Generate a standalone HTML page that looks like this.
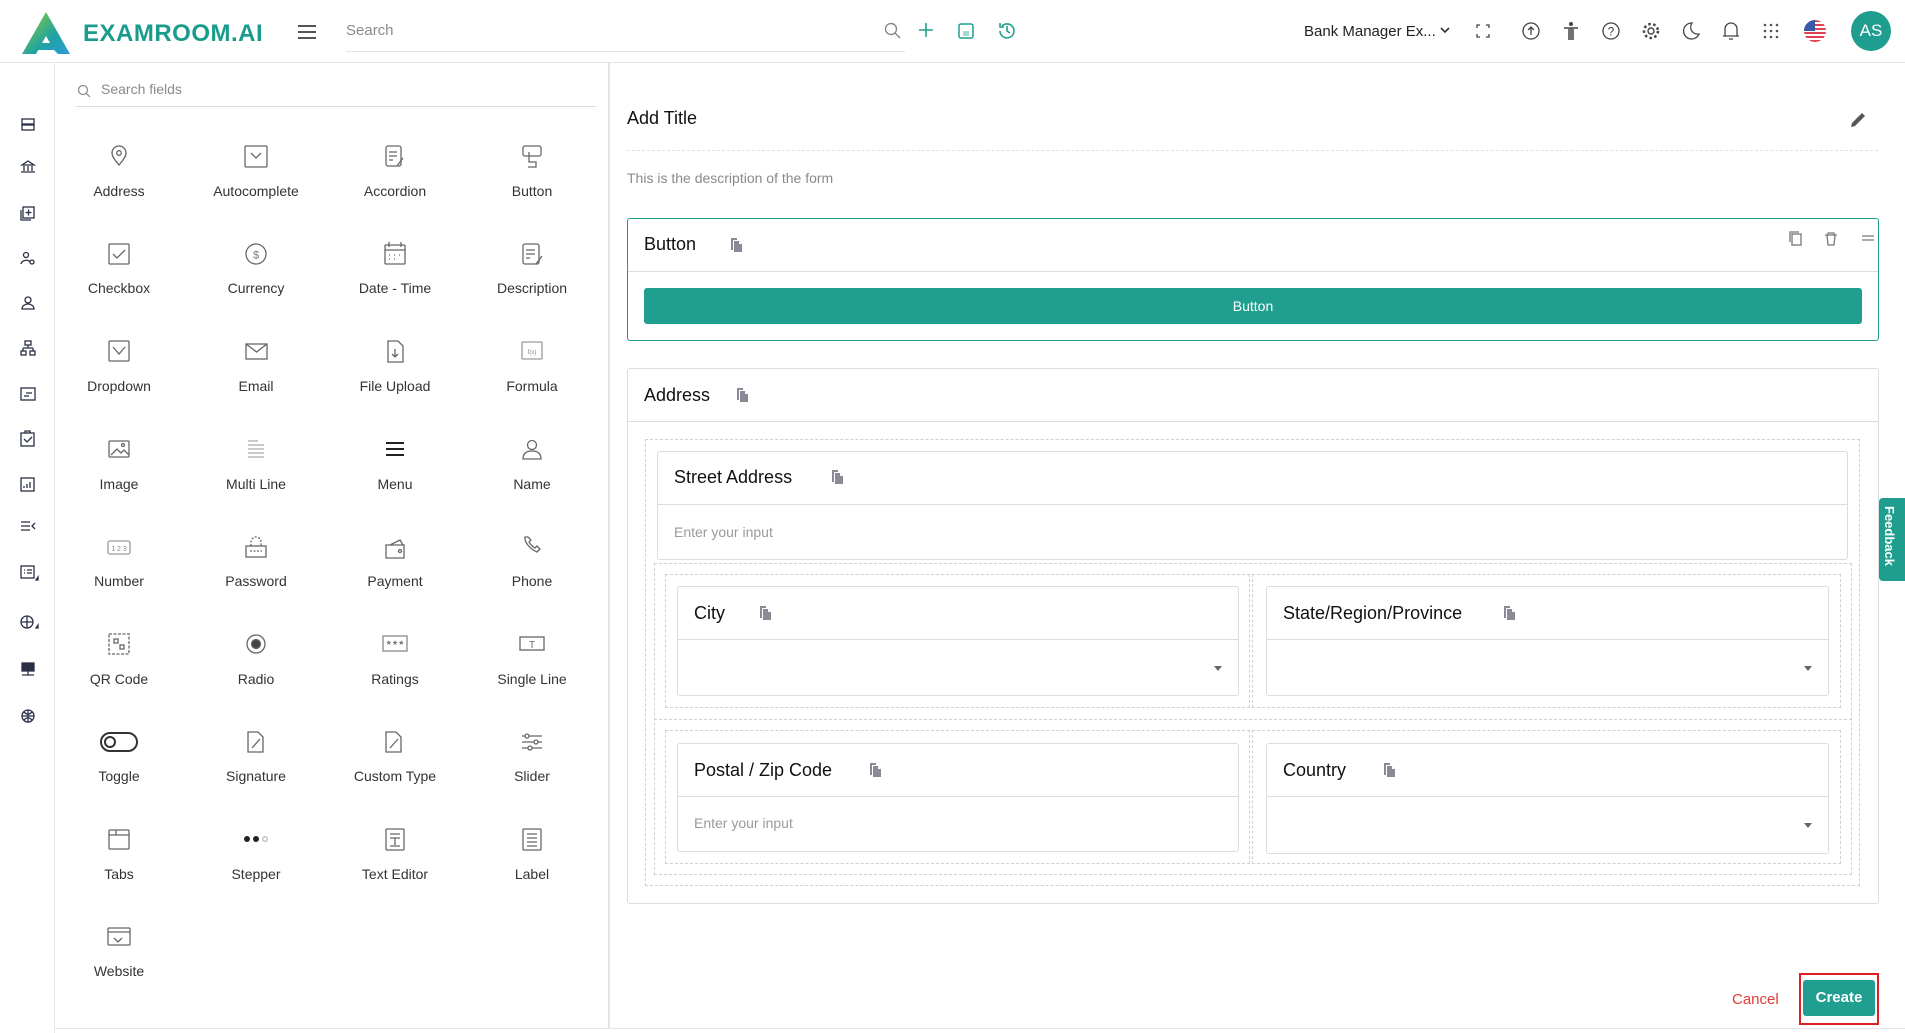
<!DOCTYPE html>
<html><head><meta charset="utf-8"><style>
*{box-sizing:border-box;margin:0;padding:0}
body{width:1905px;height:1033px;overflow:hidden;background:#fff;font-family:"Liberation Sans",sans-serif;position:relative;color:#222}
.a{position:absolute}
.hdr{left:0;top:0;width:1905px;height:63px;border-bottom:1px solid #e6e6e6}
.rail{left:0;top:63px;width:55px;height:970px;border-right:1px solid #e6e6e6}
.panel{left:55px;top:63px;width:555px;height:965px;border-right:2px solid #e4e4e8}
.fl{position:absolute;width:130px;text-align:center;font-size:14px;color:#333}
.card{position:absolute;border:1px solid #dcdce0;border-radius:3px;background:#fff}
.ttl{position:absolute;font-size:18px;color:#111}
.dash{position:absolute;border:1px dashed #cfcfd4}
.cp{position:absolute;width:11px;height:14px}
.ph{position:absolute;font-size:14px;color:#9a9aa0}
.car{position:absolute;width:0;height:0;border-left:4px solid transparent;border-right:4px solid transparent;border-top:5px solid #666}
</style></head><body>
<svg width="0" height="0" style="position:absolute"><defs>
<symbol id="cp" viewBox="0 0 11 14"><path d="M0 0h6v2H2v10H0z" fill="#8a8a96"/><path d="M3 3h5l3 3v8H3z" fill="#8a8a96"/><path d="M8 3v3h3" fill="#fff"/></symbol>
</defs></svg>

<div class="a hdr">
 <svg class="a" style="left:22px;top:12px" width="48" height="42" viewBox="0 0 48 42"><defs><linearGradient id="g" x1="0" y1="0" x2="1" y2="1"><stop offset="0" stop-color="#9acd32"/><stop offset=".6" stop-color="#1fa3a0"/><stop offset="1" stop-color="#2d9cdb"/></linearGradient></defs><path d="M24 0L0 42h14l10-18 4 7h-8l-4 7h16l4 4h12z" fill="url(#g)"/></svg>
 <div class="a" style="left:83px;top:20px;font-size:24px;font-weight:bold;color:#1a9c8c;letter-spacing:0.5px">EXAMROOM.AI</div>
 <div class="a" style="left:298px;top:25px;width:18px;height:2px;background:#555;box-shadow:0 6px 0 #555,0 12px 0 #555"></div>
 <div class="a" style="left:346px;top:22px;font-size:15px;color:#8a8a8a">Search</div>
 <div class="a" style="left:346px;top:51px;width:559px;height:1px;background:#e3e3e3"></div>
 <svg class="a" style="left:884px;top:22px" width="18" height="18"><circle cx="7" cy="7" r="5.5" fill="none" stroke="#888" stroke-width="1.4"/><path d="M11 11l5 5" stroke="#888" stroke-width="1.4"/></svg>
 <svg class="a" style="left:918px;top:22px" width="16" height="16"><path d="M8 1v14M1 8h14" stroke="#1fa08e" stroke-width="1.6"/></svg>
 <svg class="a" style="left:957px;top:22px" width="18" height="18"><rect x="2" y="2" width="14" height="14" rx="2" fill="none" stroke="#1fa08e" stroke-width="1.5"/><rect x="6" y="9" width="6" height="5" fill="#9fd8cf"/></svg>
 <svg class="a" style="left:997px;top:21px" width="19" height="19"><path d="M3 10a7 7 0 1 0 2-5M3 2v4h4M10 5v5l3 2" fill="none" stroke="#1fa08e" stroke-width="1.6"/></svg>
 <div class="a" style="left:1304px;top:23px;font-size:15px;color:#222">Bank Manager Ex...</div>
 <svg class="a" style="left:1440px;top:27px" width="10" height="8"><path d="M1 1l4 4 4-4" fill="none" stroke="#333" stroke-width="1.6"/></svg>
 <svg class="a" style="left:1476px;top:24px" width="14" height="14"><path d="M1 4V1h3M10 1h3v3M13 10v3h-3M4 13H1v-3" fill="none" stroke="#444" stroke-width="1.3"/></svg>
 <svg class="a" style="left:1521px;top:21px" width="20" height="20"><circle cx="10" cy="10" r="8" fill="none" stroke="#444" stroke-width="1.3"/><path d="M10 14V6M7 9l3-3 3 3" fill="none" stroke="#444" stroke-width="1.3"/></svg>
 <svg class="a" style="left:1563px;top:21px" width="16" height="20"><circle cx="8" cy="3" r="2" fill="#444"/><path d="M1 7h14M8 7v12M6 8v11M10 8v11" stroke="#444" stroke-width="1.5"/></svg>
 <svg class="a" style="left:1601px;top:21px" width="20" height="20"><circle cx="10" cy="10" r="8" fill="none" stroke="#444" stroke-width="1.3"/><text x="10" y="14.5" font-size="12" text-anchor="middle" fill="#444" font-family="Liberation Sans">?</text></svg>
 <svg class="a" style="left:1641px;top:21px" width="20" height="20"><circle cx="10" cy="10" r="3" fill="none" stroke="#444" stroke-width="1.4"/><circle cx="10" cy="10" r="7" fill="none" stroke="#444" stroke-width="2.5" stroke-dasharray="2.5 2.5"/></svg>
 <svg class="a" style="left:1682px;top:21px" width="18" height="20"><path d="M10 2a8 8 0 1 0 7 11A7 7 0 0 1 10 2z" fill="none" stroke="#444" stroke-width="1.3"/></svg>
 <svg class="a" style="left:1722px;top:20px" width="18" height="22"><path d="M3 16V9a6 6 0 0 1 12 0v7H3zM1 16h16M7 19h4" fill="none" stroke="#444" stroke-width="1.3"/></svg>
 <svg class="a" style="left:1763px;top:23px" width="16" height="16" fill="#555"><circle cx="2" cy="2" r="1.3"/><circle cx="8" cy="2" r="1.3"/><circle cx="14" cy="2" r="1.3"/><circle cx="2" cy="8" r="1.3"/><circle cx="8" cy="8" r="1.3"/><circle cx="14" cy="8" r="1.3"/><circle cx="2" cy="14" r="1.3"/><circle cx="8" cy="14" r="1.3"/><circle cx="14" cy="14" r="1.3"/></svg>
 <svg class="a" style="left:1804px;top:20px" width="22" height="22"><defs><clipPath id="c"><circle cx="11" cy="11" r="11"/></clipPath></defs><g clip-path="url(#c)"><rect width="22" height="22" fill="#fff"/><g fill="#e04050"><rect y="0" width="22" height="2"/><rect y="4" width="22" height="2"/><rect y="8" width="22" height="2"/><rect y="12" width="22" height="2"/><rect y="16" width="22" height="2"/><rect y="20" width="22" height="2"/></g><rect width="11" height="11" fill="#3a5aa8"/></g></svg>
 <div class="a" style="left:1851px;top:11px;width:40px;height:40px;border-radius:50%;background:#1f9e8f;color:#fff;font-size:17px;text-align:center;line-height:40px">AS</div>
</div>

<div class="a rail">
<svg class="a" style="left:0;top:0" width="55" height="690" fill="none" stroke="#2a2f45" stroke-width="1.3">
 <rect x="22" y="56" width="12" height="5"/><rect x="22" y="62" width="12" height="5"/>
 <path d="M21 109h14M22 102l6-4 6 4zM24 103v5M28 103v5M32 103v5"/>
 <rect x="23" y="144" width="11" height="11"/><path d="M21 147v10h10M28.5 146.5v6M25.5 149.5h6"/>
 <circle cx="26" cy="192" r="2.5"/><path d="M21 201c1-4 7-5 9-2"/><circle cx="32" cy="199" r="2"/>
 <circle cx="28" cy="237" r="3"/><path d="M22 246h12c0-3-3-5-6-5s-6 2-6 5z"/>
 <rect x="25" y="278" width="6" height="4"/><path d="M28 282v3M23 285h10M23 285v3M33 285v3"/><rect x="21" y="288" width="5" height="4"/><rect x="30" y="288" width="5" height="4"/>
 <rect x="21" y="325" width="14" height="12"/><path d="M24 333h5M26 330h6"/>
 <rect x="21" y="370" width="13" height="13"/><path d="M24 376l3 3 5-5M25 370v-2h5v2"/>
 <rect x="21" y="415" width="13" height="13"/><path d="M24 425v-2M27 425v-4M30 425v-6"/>
 <path d="M21 459h9M21 463h9M21 467h9M35 460l-3 3 3 3"/>
 <rect x="21" y="503" width="13" height="12"/><path d="M24 507h1M27 507h5M24 510h1M27 510h5"/><path d="M36 517l2-3v3z" fill="#2a2f45"/>
 <circle cx="27" cy="559" r="6"/><path d="M21 559h12M27 553v12"/><path d="M36 565l2-3v3z" fill="#2a2f45"/>
 <rect x="22" y="600" width="12" height="8" fill="#2a2f45"/><path d="M28 608v4M22 612h12"/>
 <circle cx="28" cy="653" r="6"/><path d="M22 653h12M28 647v12M24 649c3 3 5 3 8 0M24 657c3-3 5-3 8 0"/>
</svg>
</div>

<div class="a panel">
 <svg class="a" style="left:22px;top:21px" width="14" height="14"><circle cx="6" cy="6" r="4.5" fill="none" stroke="#888" stroke-width="1.2"/><path d="M9.5 9.5l3.5 3.5" stroke="#888" stroke-width="1.2"/></svg>
 <div class="a" style="left:46px;top:18px;font-size:14px;color:#8a8a8a">Search fields</div>
 <div class="a" style="left:21px;top:43px;width:520px;height:1px;background:#dcdcdc"></div>
</div>

<div class="a" style="left:0;top:0">
<svg class="a" style="left:0;top:0" width="610" height="1000" fill="none" stroke="#666" stroke-width="1.3">
 <path d="M119 165c-5-6-7-9-7-12a7 7 0 0 1 14 0c0 3-2 6-7 12z"/><circle cx="119" cy="153" r="2.3"/>
 <rect x="245" y="146" width="22" height="21" rx="1"/><path d="M251 153l5 5 5-5"/>
 <rect x="386" y="146" width="15" height="20" rx="2"/><path d="M389 152h8M389 156h8M389 160h4M397 166l6-8"/>
 <rect x="523" y="146" width="18" height="10" rx="2"/><path d="M529 152v10h7v5h-8"/>
 <rect x="109" y="244" width="20" height="20" rx="1"/><path d="M113 254l4 4 8-8"/>
 <circle cx="256" cy="254" r="10"/><text x="256" y="258.5" font-size="11" text-anchor="middle" fill="#777" stroke="none" font-family="Liberation Sans">$</text>
 <rect x="385" y="245" width="20" height="19" rx="1"/><path d="M385 250h20M389 242v5M401 242v5M389 255h1M394 255h1M399 255h1M389 259h1M394 259h1"/>
 <rect x="523" y="244" width="16" height="20" rx="2"/><path d="M526 250h9M526 254h9M526 258h4M536 264l6-8"/>
 <rect x="109" y="341" width="20" height="20" rx="1"/><path d="M113 347l6 7 6-7"/>
 <rect x="246" y="344" width="21" height="15"/><path d="M246 344l10.5 8 10.5-8"/>
 <path d="M388 341h10l5 5v16h-15z"/><path d="M395 349v8M392 354l3 3 3-3"/>
 <rect x="522" y="342" width="20" height="17" rx="1" stroke="#999"/><text x="532" y="354" font-size="6" text-anchor="middle" fill="#888" stroke="none">f(x)</text>
 <rect x="109" y="441" width="20" height="16" rx="1"/><path d="M111 455l6-6 4 4 3-3 5 5"/><circle cx="123" cy="445" r="1.5"/>
 <path d="M248 441h10M248 445h16M248 449h16M248 453h16M248 457h16" stroke="#aaa"/>
 <path d="M386 443h18M386 449h18M386 455h18" stroke="#222" stroke-width="2"/>
 <circle cx="532" cy="445" r="4.5"/><path d="M523 459c0-6 4-8 9-8s9 2 9 8z"/>
 <rect x="108" y="541" width="22" height="13" rx="2" stroke="#999"/><text x="119" y="551" font-size="7" text-anchor="middle" fill="#888" stroke="none">1 2 3</text>
 <rect x="246" y="546" width="20" height="11"/><path d="M251 546v-4a5 5 0 0 1 10 0v4M250 551h12" stroke-dasharray="2 1.5"/>
 <path d="M386 545h18v13h-18zM390 545l10-5 3 5"/><circle cx="400" cy="551" r="1.5"/>
 <path d="M525 537c-1 5 5 12 12 15l3-3-3-3-2 2c-2-1-5-4-6-6l2-2-3-3z"/>
 <rect x="109" y="634" width="20" height="20" stroke-dasharray="3 1.5"/><rect x="114" y="639" width="4" height="4"/><rect x="120" y="645" width="4" height="4"/>
 <circle cx="256" cy="644" r="9"/><circle cx="256" cy="644" r="4.5" fill="#444"/>
 <rect x="383" y="636" width="24" height="15" stroke="#888"/><text x="395" y="645" font-size="7" text-anchor="middle" fill="#777" stroke="none">★★★</text>
 <rect x="520" y="637" width="24" height="13"/><text x="532" y="648" font-size="10" text-anchor="middle" fill="#666" stroke="none">T</text>
 <rect x="101" y="733" width="36" height="18" rx="9" stroke="#333" stroke-width="2"/><circle cx="110" cy="742" r="5" stroke="#333" stroke-width="2"/>
 <path d="M248 732h10l5 5v15h-15zM252 748l8-9"/>
 <path d="M386 732h10l5 5v15h-15zM390 748l8-9"/>
 <path d="M522 736h20M522 742h20M522 748h20"/><circle cx="527" cy="736" r="2" fill="#fff"/><circle cx="536" cy="742" r="2" fill="#fff"/><circle cx="530" cy="748" r="2" fill="#fff"/>
 <rect x="109" y="830" width="20" height="19" rx="1"/><path d="M109 835h20M116 830v5"/>
 <circle cx="247" cy="839" r="3" fill="#222" stroke="none"/><circle cx="256" cy="839" r="3" fill="#222" stroke="none"/><circle cx="265" cy="839" r="2.3" stroke="#bbb"/>
 <rect x="386" y="829" width="18" height="21" rx="1"/><path d="M390 834h10M390 838h10M395 838v7M390 846h10"/>
 <rect x="523" y="829" width="18" height="21" rx="1"/><path d="M527 834h10M527 838h10M527 842h10M527 846h10"/>
 <rect x="108" y="928" width="22" height="17" rx="1"/><path d="M108 932h22M114 938l4 4 4-4"/>
</svg>
<div class="fl" style="left:54px;top:183px">Address</div><div class="fl" style="left:191px;top:183px">Autocomplete</div><div class="fl" style="left:330px;top:183px">Accordion</div><div class="fl" style="left:467px;top:183px">Button</div>
<div class="fl" style="left:54px;top:280px">Checkbox</div><div class="fl" style="left:191px;top:280px">Currency</div><div class="fl" style="left:330px;top:280px">Date - Time</div><div class="fl" style="left:467px;top:280px">Description</div>
<div class="fl" style="left:54px;top:378px">Dropdown</div><div class="fl" style="left:191px;top:378px">Email</div><div class="fl" style="left:330px;top:378px">File Upload</div><div class="fl" style="left:467px;top:378px">Formula</div>
<div class="fl" style="left:54px;top:476px">Image</div><div class="fl" style="left:191px;top:476px">Multi Line</div><div class="fl" style="left:330px;top:476px">Menu</div><div class="fl" style="left:467px;top:476px">Name</div>
<div class="fl" style="left:54px;top:573px">Number</div><div class="fl" style="left:191px;top:573px">Password</div><div class="fl" style="left:330px;top:573px">Payment</div><div class="fl" style="left:467px;top:573px">Phone</div>
<div class="fl" style="left:54px;top:671px">QR Code</div><div class="fl" style="left:191px;top:671px">Radio</div><div class="fl" style="left:330px;top:671px">Ratings</div><div class="fl" style="left:467px;top:671px">Single Line</div>
<div class="fl" style="left:54px;top:768px">Toggle</div><div class="fl" style="left:191px;top:768px">Signature</div><div class="fl" style="left:330px;top:768px">Custom Type</div><div class="fl" style="left:467px;top:768px">Slider</div>
<div class="fl" style="left:54px;top:866px">Tabs</div><div class="fl" style="left:191px;top:866px">Stepper</div><div class="fl" style="left:330px;top:866px">Text Editor</div><div class="fl" style="left:467px;top:866px">Label</div>
<div class="fl" style="left:54px;top:963px">Website</div>
</div>

<div class="ttl" style="left:627px;top:108px">Add Title</div>
<svg class="a" style="left:1849px;top:111px" width="18" height="18"><path d="M2 16l1-4L13 2l3 3L6 15z" fill="#555"/></svg>
<div class="a" style="left:627px;top:150px;width:1251px;border-top:1px dashed #e0e0e0"></div>
<div class="a" style="left:627px;top:170px;font-size:14px;color:#8a8a8a">This is the description of the form</div>

<div class="card" style="left:627px;top:218px;width:1252px;height:123px;border-color:#1f9e8f">
 <div class="ttl" style="left:16px;top:15px">Button</div>
 <svg class="cp" style="left:103px;top:19px"><use href="#cp"/></svg>
 <div class="a" style="left:0;top:52px;width:100%;height:1px;background:#dcdce0"></div>
 <svg class="a" style="left:1160px;top:11px" width="90" height="16" fill="none" stroke="#777" stroke-width="1.3"><rect x="4" y="4" width="9" height="11"/><path d="M2 12V2h9"/><path d="M37 5h12M40 5V3h6v2M39 5l1 10h6l1-10"/><path d="M74 6h12M74 10h12"/></svg>
 <div class="a" style="left:16px;top:69px;width:1218px;height:36px;background:#209e8f;border-radius:3px;color:#fff;font-size:14px;text-align:center;line-height:36px">Button</div>
</div>

<div class="card" style="left:627px;top:368px;width:1252px;height:536px">
 <div class="ttl" style="left:16px;top:16px">Address</div>
 <svg class="cp" style="left:109px;top:19px"><use href="#cp"/></svg>
 <div class="a" style="left:0;top:52px;width:100%;height:1px;background:#dcdce0"></div>
</div>
<div class="dash" style="left:645px;top:439px;width:1215px;height:447px"></div>
<div class="card" style="left:657px;top:451px;width:1191px;height:109px">
 <div class="ttl" style="left:16px;top:15px">Street Address</div>
 <svg class="cp" style="left:174px;top:18px"><use href="#cp"/></svg>
 <div class="a" style="left:0;top:52px;width:100%;height:1px;background:#dcdce0"></div>
 <div class="ph" style="left:16px;top:72px">Enter your input</div>
</div>
<div class="dash" style="left:654px;top:563px;width:1198px;height:312px"></div>
<div class="a" style="left:654px;top:719px;width:1198px;border-top:1px dashed #cfcfd4"></div>
<div class="dash" style="left:665px;top:574px;width:585px;height:134px"></div>
<div class="dash" style="left:1252px;top:574px;width:589px;height:134px"></div>
<div class="dash" style="left:665px;top:730px;width:585px;height:134px"></div>
<div class="dash" style="left:1252px;top:730px;width:589px;height:134px"></div>

<div class="card" style="left:677px;top:586px;width:562px;height:110px">
 <div class="ttl" style="left:16px;top:16px">City</div><svg class="cp" style="left:82px;top:19px"><use href="#cp"/></svg>
 <div class="a" style="left:0;top:52px;width:100%;height:1px;background:#dcdce0"></div><div class="car" style="left:536px;top:79px"></div>
</div>
<div class="card" style="left:1266px;top:586px;width:563px;height:110px">
 <div class="ttl" style="left:16px;top:16px">State/Region/Province</div><svg class="cp" style="left:237px;top:19px"><use href="#cp"/></svg>
 <div class="a" style="left:0;top:52px;width:100%;height:1px;background:#dcdce0"></div><div class="car" style="left:537px;top:79px"></div>
</div>
<div class="card" style="left:677px;top:743px;width:562px;height:109px">
 <div class="ttl" style="left:16px;top:16px">Postal / Zip Code</div><svg class="cp" style="left:192px;top:19px"><use href="#cp"/></svg>
 <div class="a" style="left:0;top:52px;width:100%;height:1px;background:#dcdce0"></div>
 <div class="ph" style="left:16px;top:71px">Enter your input</div>
</div>
<div class="card" style="left:1266px;top:743px;width:563px;height:111px">
 <div class="ttl" style="left:16px;top:16px">Country</div><svg class="cp" style="left:117px;top:19px"><use href="#cp"/></svg>
 <div class="a" style="left:0;top:52px;width:100%;height:1px;background:#dcdce0"></div><div class="car" style="left:537px;top:79px"></div>
</div>

<div class="a" style="left:1879px;top:498px;width:26px;height:83px;background:#1f9e8f;border-radius:4px 0 0 4px"><div style="position:absolute;left:3px;top:8px;writing-mode:vertical-rl;color:#fff;font-size:13px;font-weight:bold">Feedback</div></div>

<div class="a" style="left:1732px;top:991px;font-size:15px;color:#e53935">Cancel</div>
<div class="a" style="left:1799px;top:973px;width:80px;height:52px;border:2px solid #e02020"></div>
<div class="a" style="left:1803px;top:980px;width:72px;height:36px;background:#209e8f;border-radius:3px;color:#fff;font-size:15px;font-weight:bold;text-align:center;line-height:36px">Create</div>
<div class="a" style="left:55px;top:1028px;width:1850px;height:1px;background:#e6e6e6"></div>
</body></html>
